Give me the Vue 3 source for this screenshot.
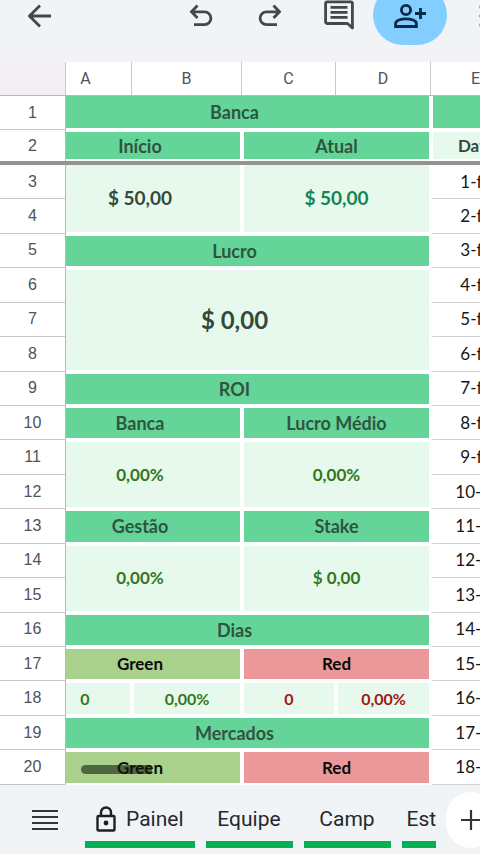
<script setup>
const columns = ['A', 'B', 'C', 'D', 'E']

const rows = [
  [
    { text: 'Banca', cols: 4, kind: 'title', first: true },
    { text: '', kind: 'title' },
  ],
  [
    { text: 'Início', cols: 2, kind: 'title', first: true },
    { text: 'Atual', cols: 2, kind: 'title' },
    { text: 'Data', kind: 'subtle' },
  ],
  [
    { text: '$ 50,00', cols: 2, span: 2, kind: 'value', tone: 'amount', first: true },
    { text: '$ 50,00', cols: 2, span: 2, kind: 'value', tone: 'amount current' },
  ],
  [],
  [{ text: 'Lucro', cols: 4, kind: 'title', first: true }],
  [{ text: '$ 0,00', cols: 4, span: 3, kind: 'value', tone: 'profit', first: true }],
  [],
  [],
  [{ text: 'ROI', cols: 4, kind: 'title', first: true }],
  [
    { text: 'Banca', cols: 2, kind: 'title', first: true },
    { text: 'Lucro Médio', cols: 2, kind: 'title' },
  ],
  [
    { text: '0,00%', cols: 2, span: 2, kind: 'value', tone: 'gain', first: true },
    { text: '0,00%', cols: 2, span: 2, kind: 'value', tone: 'gain' },
  ],
  [],
  [
    { text: 'Gestão', cols: 2, kind: 'title', first: true },
    { text: 'Stake', cols: 2, kind: 'title' },
  ],
  [
    { text: '0,00%', cols: 2, span: 2, kind: 'value', tone: 'gain', first: true },
    { text: '$ 0,00', cols: 2, span: 2, kind: 'value', tone: 'gain' },
  ],
  [],
  [{ text: 'Dias', cols: 4, kind: 'title', first: true }],
  [
    { text: 'Green', cols: 2, kind: 'green', first: true },
    { text: 'Red', cols: 2, kind: 'red' },
  ],
  [
    { text: '0', kind: 'value', tone: 'gain small', first: true },
    { text: '0,00%', kind: 'value', tone: 'gain small' },
    { text: '0', kind: 'value', tone: 'loss small' },
    { text: '0,00%', kind: 'value', tone: 'loss small' },
  ],
  [{ text: 'Mercados', cols: 4, kind: 'title', first: true }],
  [
    { text: 'Green', cols: 2, kind: 'green', first: true },
    { text: 'Red', cols: 2, kind: 'red' },
  ],
]

rows.forEach((cells, i) => {
  if (i >= 2) cells.push({ text: `${i - 1}-fev`, kind: 'date' })
})

const tabs = [
  { name: 'Painel', locked: true },
  { name: 'Equipe' },
  { name: 'Camp' },
  { name: 'Est', cut: true },
]
</script>

<template>
  <div class="app">
    <header class="toolbar">
      <button class="tool back" aria-label="Voltar">
        <svg width="24" height="24" viewBox="0 0 24 24" class="line">
          <path d="M23 12H2M12 1.500L1.500 12L12 22.500" />
        </svg>
      </button>
      <div class="actions">
        <button class="tool" aria-label="Desfazer">
          <svg width="24" height="24" viewBox="0 0 24 24" class="line">
            <path d="M8.500 1.500L2.500 7.800L8.500 14M2.500 7.800H15.500a6.400 6.400 0 0 1 0 12.800H5" />
          </svg>
        </button>
        <button class="tool" aria-label="Refazer">
          <svg width="24" height="24" viewBox="0 0 24 24" class="line">
            <path d="M15.500 1.500L21.500 7.800L15.500 14M21.500 7.800H8.500a6.400 6.400 0 0 0 0 12.800H19" />
          </svg>
        </button>
        <button class="tool comments" aria-label="Comentários">
          <svg width="30" height="30" viewBox="0 0 30 30">
            <path fill="none" stroke="#444649" stroke-width="2.800" stroke-linejoin="round" d="M3 1.800H27a1.400 1.400 0 0 1 1.400 1.400V28L23.500 23.500H3a1.400 1.400 0 0 1-1.400-1.400V3.200A1.400 1.400 0 0 1 3 1.800Z" />
            <path stroke="#444649" stroke-width="2.800" d="M6.500 7.300H23.500M6.500 12.300H23.500M6.500 17.300H23.500" />
          </svg>
        </button>
        <button class="tool share" aria-label="Compartilhar">
          <svg width="32" height="24" viewBox="0 0 32 24">
            <g fill="none" stroke="#0b2a45" stroke-width="2.800">
              <circle cx="12" cy="6" r="4.600" />
              <path d="M1.600 22.500V19.500C1.600 16.500 7 14.800 12 14.800S22.400 16.500 22.400 19.500V22.500Z" />
              <path d="M26.500 4V15M21 9.500H32" />
            </g>
          </svg>
        </button>
        <button class="tool more" aria-label="Mais opções">
          <svg width="6" height="24" viewBox="0 0 6 24" fill="#444649">
            <circle cx="3" cy="3" r="2.500" />
            <circle cx="3" cy="12" r="2.500" />
            <circle cx="3" cy="21" r="2.500" />
          </svg>
        </button>
      </div>
    </header>

    <main class="sheet">
      <table>
        <colgroup>
          <col class="col-index" />
          <col class="col-a" />
          <col class="col-b" />
          <col class="col-c" />
          <col class="col-d" />
          <col />
        </colgroup>
        <thead>
          <tr>
            <td class="corner"></td>
            <th v-for="c in columns" :key="c" scope="col" :class="{ first: c === 'A' }">{{ c }}</th>
          </tr>
        </thead>
        <tbody>
          <template v-for="(cells, i) in rows" :key="i">
            <tr :class="{ top: i === 0, frozen: i === 1, after: i === 2 }">
              <th scope="row">{{ i + 1 }}</th>
              <td
                v-for="(cell, j) in cells"
                :key="j"
                :colspan="cell.cols || 1"
                :rowspan="cell.span || 1"
                :class="[cell.kind, cell.tone, { first: cell.first }]"
              >{{ cell.text }}</td>
            </tr>
            <tr v-if="i === 1" class="divider" aria-hidden="true">
              <td colspan="6"></td>
            </tr>
          </template>
        </tbody>
      </table>
      <span class="scroll-thumb"></span>
    </main>

    <footer class="tabbar">
      <button class="all-sheets" aria-label="Todas as páginas">
        <svg width="26" height="22" viewBox="0 0 26 22">
          <path stroke="#333638" stroke-width="2.200" d="M0 2H26M0 8H26M0 14H26M0 20H26" />
        </svg>
      </button>
      <nav class="tabs">
        <button v-for="t in tabs" :key="t.name" class="tab" :class="{ cut: t.cut }">
          <svg v-if="t.locked" width="20" height="26" viewBox="0 0 20 26">
            <g fill="none" stroke="#1d1f21" stroke-width="2.400">
              <rect x="1.500" y="10" width="17" height="14.500" rx="1" />
              <path d="M5 10V6.500a5 5 0 0 1 10 0V10" />
            </g>
            <circle cx="10" cy="17" r="2.400" fill="#1d1f21" />
          </svg>
          {{ t.name }}
        </button>
      </nav>
      <button class="add" aria-label="Adicionar página">
        <svg width="22" height="22" viewBox="0 0 22 22">
          <path stroke="#333638" stroke-width="2.200" d="M11 1V21M1 11H21" />
        </svg>
      </button>
    </footer>
  </div>
</template>

<style>
body {
  margin: 0;
}
</style>

<style scoped>
.app {
  display: flex;
  flex-direction: column;
  height: 100vh;
  overflow: hidden;
  background: #fff;
  font-family: Roboto, "Liberation Sans", sans-serif;
}

button {
  border: 0;
  padding: 0;
  background: none;
  color: inherit;
  font: inherit;
}

svg {
  display: block;
  flex: none;
}

.line {
  fill: none;
  stroke: #444649;
  stroke-width: 2.8px;
}

.toolbar {
  display: flex;
  flex: none;
  justify-content: space-between;
  height: 62px;
  padding-left: 28px;
  background: #f1f3f7;
}

.actions {
  display: flex;
  margin-right: -5px;
}

.tool {
  display: flex;
  justify-content: center;
  width: 69px;
  height: 44px;
  padding-top: 4px;
}

.tool.comments {
  padding-top: 0;
}

.tool.back {
  width: 24px;
}

.tool.share {
  width: 74px;
  height: 60px;
  margin-top: -15px;
  padding-top: 19px;
  border-radius: 30px;
  background: #82cfff;
}

.tool.more {
  width: 38px;
  justify-content: flex-end;
}

.sheet {
  position: relative;
  flex: 1;
  min-height: 0;
  overflow: hidden;
}

table {
  width: 521px;
  min-width: 100%;
  height: 100%;
  table-layout: fixed;
  border-collapse: separate;
  border-spacing: 0;
}

.col-index,
.col-a {
  width: 66px;
}

.col-b {
  width: 110px;
}

.col-c {
  width: 94px;
}

.col-d {
  width: 95px;
}

tr {
  height: 34px;
}

th,
td {
  box-sizing: border-box;
  padding: 0;
  line-height: 20px;
  text-align: center;
  vertical-align: middle;
  white-space: nowrap;
}

thead th,
.corner {
  border-right: 1px solid #c9c7ca;
  border-bottom: 1px solid #bdb5b9;
  color: #505357;
  font-size: 16px;
  font-weight: 400;
}

.corner {
  background: #f2f0f2;
}

tbody th {
  border-right: 1px solid #bdb5b9;
  border-bottom: 1px solid #c9c4c8;
  color: #505357;
  font-family: "Liberation Sans", Arial, sans-serif;
  font-size: 16px;
  font-weight: 400;
}

tbody td {
  border: 2px solid #fff;
  background-clip: padding-box;
  color: #34493c;
  font-family: Lato, "Open Sans", sans-serif;
  font-size: 17px;
  font-weight: 700;
}

tbody td.first {
  border-left: 0;
}

.first {
  padding-right: 26px;
}

.top td,
.after td {
  border-top: 0;
}

.frozen {
  height: 30px;
}

.frozen th {
  border-bottom: 0;
}

.divider {
  height: 4px;
}

.divider td {
  border: 0;
  background: #929492;
  line-height: 0;
}

tbody td.title {
  background-color: #64d498;
  color: #2f5540;
  font-size: 18px;
}

.value,
.subtle {
  background-color: #e6f9ec;
}

.green {
  background-color: #a9d18c;
}

.red {
  background-color: #ec9799;
}

tbody td.green,
tbody td.red {
  color: #0a0a0a;
}

tbody td.amount {
  font-size: 19px;
}

tbody td.current {
  color: #138553;
}

tbody td.profit {
  font-size: 24px;
}

tbody td.gain {
  color: #34771c;
}

tbody td.loss {
  color: #a31515;
}

tbody td.small {
  font-size: 16px;
}

tbody td.date {
  padding-left: 8px;
  border-top: 0;
  border-bottom: 1px solid #d2d2d2;
  color: #161616;
  font-weight: 400;
}

.scroll-thumb {
  position: absolute;
  bottom: 11px;
  left: 81px;
  width: 71px;
  height: 9px;
  border-radius: 5px;
  background: rgba(20, 30, 15, 0.6);
}

.tabbar {
  display: flex;
  flex: none;
  height: 69px;
  background: #f0f4f6;
  color: #26292c;
}

.all-sheets {
  display: flex;
  flex: none;
  align-items: center;
  justify-content: flex-end;
  width: 58px;
  margin-right: 27px;
}

.tabs {
  display: flex;
  flex: 1;
  gap: 11px;
  min-width: 0;
  overflow: hidden;
}

.tab {
  display: flex;
  flex: none;
  align-items: center;
  justify-content: center;
  gap: 10px;
  box-sizing: border-box;
  min-width: 87px;
  height: 63px;
  padding: 12px 11px 0;
  border-bottom: 7px solid #04b152;
  font-size: 21px;
  line-height: 24px;
}

.tab.cut {
  justify-content: flex-start;
  padding: 12px 0 0 5px;
}

.add {
  display: flex;
  flex: none;
  align-items: center;
  justify-content: center;
  width: 50px;
  height: 56px;
  margin: 7px -16px 0 10px;
  border-radius: 28px;
  background: #fff;
}
</style>
